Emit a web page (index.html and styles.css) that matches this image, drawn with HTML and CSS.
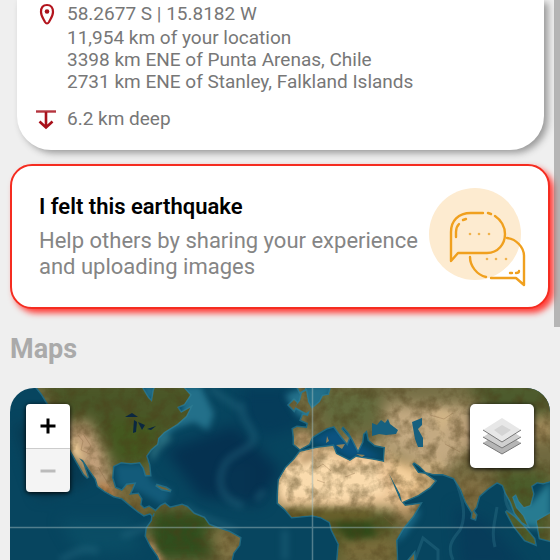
FILE: index.html
```html
<!DOCTYPE html>
<html lang="en">
<head>
<meta charset="utf-8">
<meta name="viewport" content="width=device-width, initial-scale=1">
<title>Earthquake details</title>
<link rel="stylesheet" href="styles.css">
</head>
<body>
<main class="page">
  <section class="details">
    <div class="detail">
      <svg class="detail-icon" viewBox="0 0 22 22" aria-hidden="true">
        <path d="M12 2C8 2 6 5 6 9c0 4 2.500 7 4 10q2 3 4 0c1.500-3 4-6 4-10 0-4-2-7-6-7z" fill="none" stroke="#b3141d" stroke-width="2.200"/>
        <circle cx="12" cy="8.500" r="2.300" fill="#a8101a"/>
      </svg>
      <div class="detail-text">
        <p class="coords">58.2677 S | 15.8182 W</p>
        <p>11,954 km of your location</p>
        <p>3398 km ENE of Punta Arenas, Chile</p>
        <p>2731 km ENE of Stanley, Falkland Islands</p>
      </div>
    </div>
    <div class="detail">
      <svg class="detail-icon" viewBox="0 0 22 22" aria-hidden="true">
        <path d="M1 3.500h20" stroke="#b5343e" stroke-width="2.400"/>
        <path d="M11 4v15M4.500 13.500l6.500 6 6.500-6" fill="none" stroke="#a8101a" stroke-width="2.600"/>
      </svg>
      <p class="detail-text">6.2 km deep</p>
    </div>
  </section>

  <a class="felt" href="#report">
    <span class="felt-text">
      <strong class="felt-title">I felt this earthquake</strong>
      <span class="felt-copy">Help others by sharing your experience and uploading images</span>
    </span>
    <svg class="felt-icon" viewBox="0 0 98 100" aria-hidden="true">
      <circle cx="47" cy="47" r="46" fill="#fdebd0"/>
      <path d="M85 75c2-5 8-10 11-16v32H66z" fill="#fff"/>
      <g fill="none" stroke="#f0a01e" stroke-width="2.400" stroke-linecap="round" stroke-linejoin="round">
        <path d="M55 26H43C30 26 23 34 23 45v29l7-8h29c11 0 18-9 18-19 0-7-4-14-10-18M60 26l3 1"/>
        <path d="M28 50v-5q0-5 3-8M35 33l3-1"/>
        <path d="M79 51c9 1 17 9 17 18v29l-8-7H63M58 90c-9-2-16-11-16-20"/>
        <path d="M82 86h2M88 86q3 0 3-2"/>
      </g>
      <g fill="#f0b34e"><circle cx="42" cy="47" r="1.300"/><circle cx="51" cy="47" r="1.300"/><circle cx="61" cy="47" r="1.300"/><circle cx="59" cy="72" r="1.300"/><circle cx="68" cy="72" r="1.300"/><circle cx="78" cy="72" r="1.300"/></g>
    </svg>
  </a>

  <h2 class="heading">Maps</h2>

  <section class="map" aria-label="World map">
    <svg class="map-art" viewBox="10 388 540 172" preserveAspectRatio="xMidYMin slice" aria-hidden="true">
      <defs>
        <filter id="soft" x="-60%" y="-60%" width="220%" height="220%" color-interpolation-filters="sRGB"><feGaussianBlur stdDeviation="7"/></filter>
        <filter id="mid" x="-40%" y="-40%" width="180%" height="180%" color-interpolation-filters="sRGB"><feGaussianBlur stdDeviation="3"/></filter>
        <filter id="edge" color-interpolation-filters="sRGB"><feGaussianBlur stdDeviation=".6"/></filter>
        <filter id="grain" x="0" y="0" width="100%" height="100%" color-interpolation-filters="sRGB"><feTurbulence type="fractalNoise" baseFrequency=".08" numOctaves="4" seed="8"/><feColorMatrix values="0 0 0 0 .3  0 0 0 0 .24  0 0 0 0 .1  2.600 0 0 0 -1.050"/></filter>
        <path id="shore" d="M34 384L42 394L50 407L55 413L58 425L66 436L69 447L72 453L77 462L84 474L88 478L83 463L79 458L83 460L89 469L96 479L98 486L105 491L114 496L122 498L128 503L133 507L138 511L144 515L150 513L154 517L155 511L149 507L144 509L140 505L141 499L138 494L129 495L132 489L134 484L127 485L122 491L115 488L112 478L113 466L121 462L131 463L140 462L144 468L146 475L150 475L149 465L146 456L151 449L157 444L158 438L164 432L172 427L177 424L186 416L190 408L181 413L177 407L184 404L190 395L180 384L157 384L154 390L152 402L148 398L142 388L139 384Z
          M153 514L161 506L165 504L170 508L182 505L187 507L194 514L204 518L209 525L217 528L229 532L240 538L239 545L233 553L230 566L162 566L158 556L151 546L146 536L147 528L152 521Z
          M293 429L297 427L307 428L308 423L301 420L303 415L308 416L310 410L314 407L320 402L323 396L329 395L332 384L560 384L560 472L550 481L543 483L537 482L531 486L533 494L530 505L524 507L519 501L516 494L512 497L516 508L523 516L527 525L522 522L515 513L511 502L506 493L503 485L497 482L494 484L487 489L479 496L476 507L472 512L466 502L461 489L454 478L443 474L434 474L426 472L420 466L414 462L412 464L418 473L425 474L435 481L430 487L418 495L402 502L400 494L392 479L384 465L385 447L375 445L369 440L367 430L363 434L362 442L358 450L353 440L349 433L343 426L341 429L349 438L347 443L342 437L334 426L327 428L320 432L312 437L309 444L300 449L294 444L294 437Z
          M300 452L317 448L333 446L336 454L350 461L356 457L374 460L384 462L389 474L400 500L405 506L420 504L413 516L403 528L396 540L397 566H337L339 544L332 530L330 522L321 517L312 515L292 517L285 509L278 503L278 495L279 480L286 468L294 460Z
          M295 407L300 401L302 393L306 391L308 402L312 409L306 413Z M289 405L294 400L297 403L294 410Z M296 384L304 384L305 389L300 392Z
          M506 511L514 517L525 528L534 539L535 544L525 540L514 526Z M537 521L551 513V541L540 538Z M156 485L166 488L171 491L162 489Z M409 560L414 554L414 562Z M473 511L476 515L475 519L472 518Z"/>
        <clipPath id="land"><use href="#shore"/></clipPath>
      </defs>
      <rect x="0" y="380" width="570" height="190" fill="#07455f"/>
      <g filter="url(#soft)">
        <path d="M165 450l70-25 45 45-20 35-60-8z" fill="#053150"/>
        <path d="M240 388h48l15 38-38 12-25-20z" fill="#053c5a"/>
        <path d="M15 425h40l35 55-50 18z" fill="#07384f"/>
        <path d="M455 505l30 15 45 50h-70z" fill="#073c5a"/>
        <path d="M220 470l30-10 0 45-25-5z" fill="#063452"/>
        <path d="M60 520h70l10 30-60 5z" fill="#0a4d65"/>
      </g>
      <g filter="url(#mid)" fill="#23708a">
        <path d="M183 386h18l13 28-6 16-14-8-18 6-18 13-8-3 20-17 12-8z"/>
        <path d="M285 395l25-10h25l-22 36-16-6z"/>
        <path d="M114 464h30l8 18 20 8-8 16-26-15-20-4z" fill="#135b7a"/>
        <path d="M152 463l-2-12 8-10 9-8 5 6-12 10z" fill="#286c7d"/>
        <path d="M507 490l12 5 10 10 22-25v50l-35-5z" fill="#277b91"/>
        <path d="M141 386h17l-8 18z"/>
        <path d="M393 545l14-28 12-10 0 8-14 20z" fill="#1b6a88"/>
        <path d="M310 440l25-12 30 20 18 10-35 0-15-10z" fill="#0b5380"/>
      </g>
      <g fill="none" stroke="#2d7188" stroke-width="3" opacity=".4" filter="url(#edge)">
        <path d="M455 478c8 22 12 38 5 52-6 8-14 15-7 30M497 507c-2 15-6 25-2 40M415 560l8-22 15 12v10M506 490c-4 15 8 25 14 38"/>
      </g>
      <g fill="none" stroke="#2d7188" stroke-width="7" opacity=".35" filter="url(#mid)">
        <path d="M243 403c-8 15 22 32 6 43-12 8-23 12-26 22-8 20 3 33 20 38M264 490l-8 10M60 560c15-7 25-15 38-8M122 536l42-15M185 505c10 12 35 17 52 28M210 388l20 14 15 10M285 530v30"/>
      </g>
      <use href="#shore" fill="none" stroke="#328096" stroke-width="3" opacity=".6" filter="url(#edge)"/>
      <g filter="url(#edge)">
        <g clip-path="url(#land)">
          <rect x="0" y="380" width="570" height="190" fill="#716a40"/>
          <g filter="url(#soft)">
            <path d="M40 380h160v40l-45 32-10 22-35-8-22-22-35-36z" fill="#4a5627"/>
            <path d="M105 420h50v40h-40z" fill="#44581f"/>
            <path d="M64 425l24-5 20 38 0 20 14 18-12 0-24-18z" fill="#c4a17c"/>
            <path d="M110 490h50v25h-25z" fill="#746536"/>
            <path d="M150 510h70v50h-70z" fill="#304e1d"/>
            <path d="M205 528h35v35h-22z" fill="#817344"/>
            <path d="M310 388h70l-4 38-45 5z" fill="#636b3d"/>
            <path d="M380 383h85l-5 18-78 5z" fill="#777047"/>
            <path d="M275 445h110l25 54-18 10H276z" fill="#efc99a"/>
            <path d="M388 458l40 10 10 16-33 22z" fill="#ecc38d"/>
            <path d="M280 511h110l15 54H335l-8-35z" fill="#4a5522"/>
            <path d="M340 535h57v30h-57z" fill="#796c3b"/>
            <path d="M395 505l25-4-15 22z" fill="#cfa171"/>
            <path d="M385 405h88l-8 48-22 20-55-25z" fill="#c4aa82"/>
            <path d="M465 380h90v38h-60z" fill="#4d5b2d"/>
            <path d="M450 420h70v30h-60z" fill="#b99e77"/>
            <path d="M533 415h20v25h-20z" fill="#aa9060"/>
            <path d="M452 477l40 2-20 35z" fill="#837044"/>
            <path d="M496 470h54v85h-40z" fill="#4b5c2a"/>
          </g>
          <g filter="url(#mid)">
            <path d="M280 474l24-17 20-4 23 14 28-6 10 33-36 7-68-4z" fill="#fadbad"/>
            <path d="M392 463l28 16-14 12zM68 438l8 2 10 24-14-11z" fill="#f4d09c"/>
            <path d="M280 510h95l-8 10h-82z" fill="#665d29"/>
            <path d="M335 522h35l8 14-30 4z" fill="#304a19"/>
            <path d="M415 465l25-6 8 14-20-2zM430 408l24 4-12 22z" fill="#cfb385"/>
            <path d="M302 455l15-8 5 8-22 11zM296 432h14v11h-14z" fill="#bc9a6e"/>
            <path d="M148 534l8 16 10 14h-18z" fill="#cd9870"/>
            <path d="M97 480l10 6 12 11-14-3z" fill="#c4824b"/>
          </g>
          <rect x="0" y="380" width="570" height="190" filter="url(#grain)" opacity=".45"/>
          <g fill="none" stroke="#80613f" stroke-width="1" opacity=".3">
            <path d="M78 435l5 6-2 9 9 4M83 434l8 12-4 6M98 467l12 20M317 468l6-4 8 7M345 477l10-4M317 480l8 3M384 517l9 8M430 415l14 4 9-6M445 444l15 8"/>
          </g>
        </g>
        <path d="M372 423l5 2 4-5 4 3 3-4 2 5 8 6-2 4-10 1-7-1-7 2zM412 422l10-4v7l-4 4 5 9v9l-5 0-3-8z" fill="#17607f"/>
        <path d="M125 417l7-4 6 4-8 0zM134 420l-1 13 3-1 1-10zM138 422l7 3-3 5zM147 429l9-3-5 4z" fill="#0b2740"/>
        <path d="M336 445l9-1-3 5zM356 454l9 1-3 2zM327 436l2 5-3 2z" fill="#8f8159"/>
      </g>
      <path d="M10 527.500h540M312.500 388v172" stroke="#9cb8bb" stroke-width="1.500" opacity=".5"/>
    </svg>
    <div class="zoom">
      <button class="zoom-button" type="button" aria-label="Zoom in"><svg viewBox="0 0 16 16" aria-hidden="true"><path d="M0.500 8h15M8 .5v15" stroke="#000" stroke-width="3"/></svg></button>
      <button class="zoom-button" type="button" aria-label="Zoom out" disabled><svg viewBox="0 0 16 16" aria-hidden="true"><path d="M.5 8h15" stroke="#bbb" stroke-width="3"/></svg></button>
    </div>
    <button class="layers" type="button" aria-label="Layers">
      <svg viewBox="0 0 40 38" aria-hidden="true">
        <path d="M1 26l19-12 19 12-19 11z" fill="#b5b5b5"/><path d="M1 26l19 11 19-11" fill="none" stroke="#777"/>
        <path d="M1 20l19-12 19 12-19 11z" fill="#d0d0d0"/><path d="M1 20l19 11 19-11" fill="none" stroke="#777"/>
        <path d="M1 13L20 1l19 12-19 12z" fill="#e7e7e7"/><path d="M12 13l8-5 9 5-9 6z" fill="#d4d4d4"/><path d="M1 13l19 12 19-12" fill="none" stroke="#777"/>
      </svg>
    </button>
  </section>
</main>
<div class="scroll-thumb"></div>
</body>
</html>
```
FILE: styles.css
```css
* { box-sizing: border-box; }

body {
  margin: 0;
  background: #efefef;
  font-family: Roboto, "Liberation Sans", sans-serif;
}

p, h2 { margin: 0; }

.page { padding: 0 10px; }

.details {
  display: grid;
  gap: 15px;
  margin: 0 6px 0 7px;
  padding: 3px 18px 20px;
  border-radius: 0 0 34px 34px;
  background: #fff;
  box-shadow: 4px 3px 7px #999;
  color: #777;
  font-size: 19px;
  line-height: 22px;
}

.detail {
  display: flex;
  gap: 10px;
}

.detail-icon {
  flex: none;
  width: 22px;
  height: 22px;
}

.coords { padding-bottom: 2px; }

.felt {
  position: relative;
  display: flex;
  align-items: center;
  justify-content: space-between;
  margin-top: 14px;
  padding: 21px 22px 20px 27px;
  border: 2px solid #f52c20;
  border-radius: 22px;
  background: #fff;
  box-shadow: 4px 4px 6px #ff3b36;
  color: #858585;
  font-size: 22px;
  line-height: 26px;
  text-decoration: none;
}

.felt-text {
  display: grid;
  flex: 1;
  gap: 8px;
}

.felt-title {
  color: #000;
  font-weight: 600;
}

.felt-icon {
  flex: none;
  width: 98px;
  height: 100px;
}

.heading {
  margin: 24px 0 23px;
  color: #aaa;
  font-size: 27px;
  font-weight: 700;
  line-height: 32px;
}

.map {
  position: relative;
  height: 172px;
  border-radius: 24px 24px 0 0;
  overflow: hidden;
}

.map-art {
  display: block;
  width: 100%;
  height: 100%;
}

.zoom {
  position: absolute;
  top: 16px;
  left: 16px;
  border-radius: 4px;
  box-shadow: 0 1px 5px #000;
  overflow: hidden;
}

.zoom-button {
  display: grid;
  place-items: center;
  width: 44px;
  height: 44px;
  padding: 0;
  border: 0;
  background: #fff;
}

.zoom-button + .zoom-button { border-top: 1px solid #ccc; }

.zoom-button:disabled { background: #f4f4f4; }

.zoom-button svg { width: 16px; }

.layers {
  position: absolute;
  top: 16px;
  right: 16px;
  display: grid;
  place-items: center;
  width: 64px;
  height: 64px;
  padding: 0;
  border: 0;
  border-radius: 5px;
  background: #fff;
  box-shadow: 0 1px 5px #000;
}

.layers svg { width: 40px; }

.scroll-thumb {
  position: absolute;
  top: 0;
  right: 0;
  width: 6px;
  height: 327px;
  background: rgb(110 110 110 / 45%);
}
```
